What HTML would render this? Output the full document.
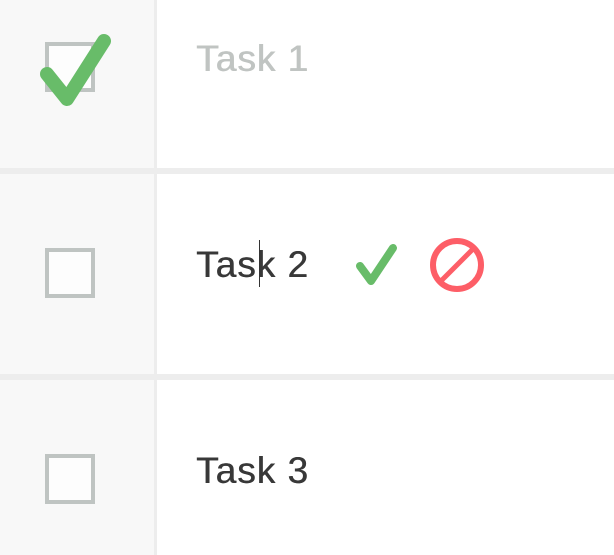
<!DOCTYPE html>
<html><head><meta charset="utf-8"><style>
html,body{margin:0;padding:0;width:614px;height:555px;overflow:hidden;background:#fff;font-family:"Liberation Sans",sans-serif;}
.a{position:absolute}
.left{left:0;width:154px;background:#f8f8f8}
.vb{left:154px;width:3px;background:#ededed}
.sep{left:0;width:614px;height:6px;background:#ededed}
.cb{width:42px;height:42px;border:4px solid #bfc4c2;left:45px;background:#fdfdfd}
.t{left:196px;font-size:37px;line-height:37px;color:#383838;letter-spacing:1px;text-shadow:0.5px 0 0 currentColor}
</style></head><body>
<div class="a left" style="top:0;height:555px"></div>
<div class="a vb" style="top:0;height:555px"></div>
<div class="a sep" style="top:168px"></div>
<div class="a sep" style="top:374px"></div>
<div class="a cb" style="top:42px"></div>
<div class="a cb" style="top:248px"></div>
<div class="a cb" style="top:454px"></div>
<div class="a t" style="top:40px;color:#c0c4c2;text-shadow:0.8px 0 0 #c0c4c2">Task 1</div>
<div class="a t" style="top:246px">Task 2</div>
<div class="a" style="left:259px;top:240px;width:1px;height:47px;background:#333"></div>
<div class="a t" style="top:452px">Task 3</div>
<svg class="a" style="left:0;top:0" width="614" height="555">
<polyline points="47,74 67,99 104,41" fill="none" stroke="#68bc69" stroke-width="14" stroke-linecap="round" stroke-linejoin="round"/>
<polyline points="360,266 371,281 393,248" fill="none" stroke="#68bc69" stroke-width="8" stroke-linecap="round" stroke-linejoin="round"/>
<circle cx="457" cy="265" r="24" fill="none" stroke="#fd5e67" stroke-width="6"/>
<line x1="474" y1="248" x2="440" y2="282" stroke="#fd5e67" stroke-width="5"/>
</svg>
</body></html>
